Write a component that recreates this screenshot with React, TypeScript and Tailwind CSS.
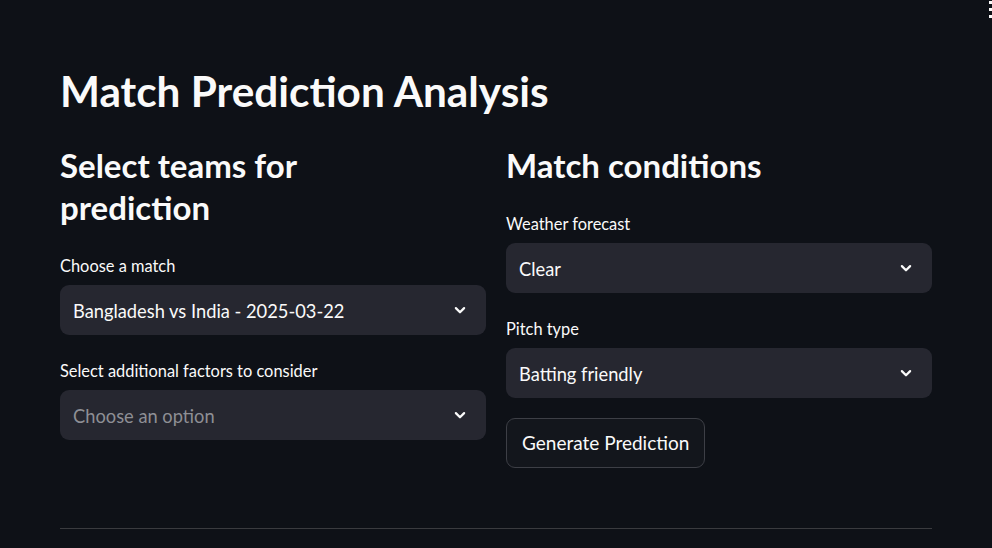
import React from "react";

// chevron as in the select boxes
function Chevron() {
  return (
    <svg width="18" height="18" viewBox="0 0 24 24" fill="none" stroke="#fafafa" strokeWidth="3" strokeLinecap="round" strokeLinejoin="round">
      <path d="M6.5 9.5l5.5 5.5 5.5-5.5" />
    </svg>
  );
}

function Select({ label, value, placeholder }: { label: string; value?: string; placeholder?: string }) {
  return (
    <div className="flex flex-col">
      <label className="text-[16.4px] leading-[20px] text-[#fafafa] mb-[9px]">{label}</label>
      <div className="h-[50px] rounded-[9px] bg-[#262730] flex items-center justify-between pl-[13px] pr-[17px]">
        <span className={`text-[18.3px] leading-[22px] pt-[1px] ${value ? "text-[#fafafa]" : "text-[#8e8f95]"}`}>{value ?? placeholder}</span>
        <Chevron />
      </div>
    </div>
  );
}

export default function App() {
  return (
    <div className="relative w-[992px] h-[548px] overflow-hidden bg-[#0e1117] text-[#fafafa] font-['Lato','Liberation_Sans',sans-serif]">
      {/* menu dots, clipped at the edge */}
      <div className="absolute right-0 top-[1px] flex flex-col gap-[4px]">
        <span className="block w-[3px] h-[3px] bg-[#fafafa]" />
        <span className="block w-[3px] h-[3px] bg-[#fafafa]" />
        <span className="block w-[3px] h-[3px] bg-[#fafafa]" />
      </div>

      <div className="px-[60px] pt-[64px]">
        <h1 className="text-[42.3px] font-bold leading-[54px]">Match Prediction Analysis</h1>

        <div className="mt-[26px] grid grid-cols-2 gap-[20px]">
          <div className="flex flex-col">
            <h2 className="text-[33px] font-bold leading-[42px] w-[300px]">Select teams for prediction</h2>
            <div className="mt-[28px] flex flex-col gap-[26px]">
              <Select label="Choose a match" value="Bangladesh vs India - 2025-03-22" />
              <Select label="Select additional factors to consider" placeholder="Choose an option" />
            </div>
          </div>

          <div className="flex flex-col">
            <h2 className="text-[33px] font-bold leading-[42px]">Match conditions</h2>
            <div className="mt-[28px] flex flex-col gap-[26px]">
              <Select label="Weather forecast" value="Clear" />
              <Select label="Pitch type" value="Batting friendly" />
            </div>
            <div className="mt-[20px]">
              <button className="h-[50px] px-[15px] rounded-[9px] border border-[#3d3f46] bg-[#13161c] text-[19px] text-[#fafafa]">
                Generate Prediction
              </button>
            </div>
          </div>
        </div>

        <div className="mt-[60px] h-px bg-[#3a3b3f]" />
      </div>
    </div>
  );
}
